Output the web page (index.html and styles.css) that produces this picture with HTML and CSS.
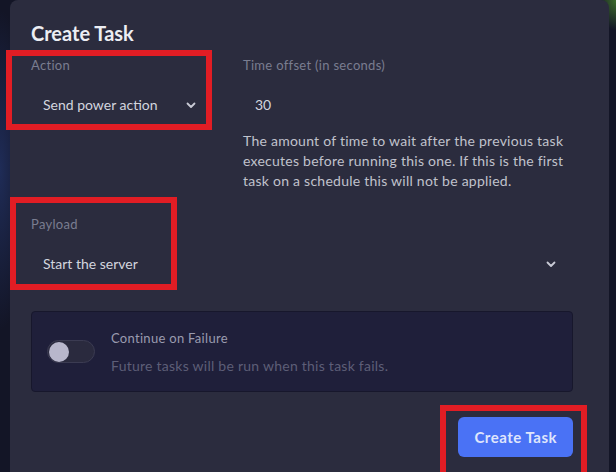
FILE: index.html
```html
<!DOCTYPE html>
<html lang="en">
<head>
<meta charset="utf-8">
<title>Create Task</title>
<link rel="stylesheet" href="styles.css">
</head>
<body>
<div class="modal">
  <h2 class="title">Create Task</h2>
  <div class="row">
    <div class="field">
      <label class="label">Action</label>
      <div class="select select-short">
        <span>Send power action</span>
        <svg class="chev" width="10" height="7" viewBox="0 0 10 7"><polyline points="1.5,1.5 5,5 8.5,1.5" fill="none" stroke="#c9cbd6" stroke-width="1.8" stroke-linecap="round" stroke-linejoin="round"/></svg>
      </div>
    </div>
    <div class="field">
      <label class="label">Time offset (in seconds)</label>
      <div class="input">30</div>
      <p class="help">The amount of time to wait after the previous task executes before running this one. If this is the first task on a schedule this will not be applied.</p>
    </div>
  </div>
  <div class="field payload">
    <label class="label">Payload</label>
    <div class="select">
      <span>Start the server</span>
      <svg class="chev" width="10" height="7" viewBox="0 0 10 7"><polyline points="1.5,1.5 5,5 8.5,1.5" fill="none" stroke="#c9cbd6" stroke-width="1.8" stroke-linecap="round" stroke-linejoin="round"/></svg>
    </div>
  </div>
  <div class="switch-box">
    <div class="switch"><span class="knob"></span></div>
    <div class="switch-text">
      <div class="switch-title">Continue on Failure</div>
      <p class="switch-desc">Future tasks will be run when this task fails.</p>
    </div>
  </div>
  <div class="actions">
    <button class="btn">Create Task</button>
  </div>
  <div class="mark mark-action"></div>
  <div class="mark mark-payload"></div>
  <div class="mark mark-button"></div>
</div>
</body>
</html>
```
FILE: styles.css
```css
html, body {
  margin: 0;
  padding: 0;
}
body {
  width: 616px;
  height: 472px;
  overflow: hidden;
  background:
    radial-gradient(ellipse 30px 160px at 0px 170px, #1f2c57 0%, rgba(31,44,87,0) 100%),
    radial-gradient(ellipse 20px 30px at 616px 0px, #3d6d2c 0%, rgba(61,109,44,0) 100%),
    #131526;
  font-family: Lato, "Open Sans", sans-serif;
}
.modal {
  position: relative;
  margin-left: 10px;
  width: 599px;
  height: 480px;
  box-sizing: border-box;
  padding: 21px 36px 0 21px;
  background: #2b2c3e;
  border-radius: 8px 8px 0 0;
}
.title {
  margin: 0 0 12px;
  font-size: 20px;
  line-height: 24px;
  font-weight: 700;
  color: #eceef3;
}
.row {
  display: grid;
  grid-template-columns: 196px 1fr;
  column-gap: 16px;
}
.label {
  display: block;
  font-size: 13px;
  line-height: 16px;
  letter-spacing: 0.3px;
  color: #7a7d90;
  margin-bottom: 12px;
}
.select {
  display: flex;
  align-items: center;
  justify-content: space-between;
  height: 40px;
  padding: 0 17px 0 12px;
  font-size: 14px;
  line-height: 20px;
  color: #d3d5de;
}
.select-short {
  width: 175px;
  box-sizing: border-box;
  padding-right: 10px;
}
.chev {
  display: block;
}
.input {
  height: 40px;
  display: flex;
  align-items: center;
  padding-left: 12px;
  font-size: 14px;
  line-height: 20px;
  color: #d3d5de;
}
.help {
  margin: 6px 0 0;
  font-size: 14px;
  line-height: 20px;
  letter-spacing: 0.25px;
  color: #c0c2cc;
}
.payload {
  margin-top: 25px;
}
.switch-box {
  margin-top: 27px;
  height: 81px;
  box-sizing: border-box;
  display: flex;
  align-items: center;
  gap: 16px;
  padding-left: 15px;
  background: #1f1f3a;
  border: 1px solid #17172c;
  border-radius: 4px;
}
.switch {
  position: relative;
  width: 48px;
  height: 23px;
  box-sizing: border-box;
  border-radius: 12px;
  background: #2a2a3e;
  border: 1px solid #3b3b52;
  flex: none;
}
.knob {
  position: absolute;
  left: 1px;
  top: 0.5px;
  width: 20px;
  height: 20px;
  border-radius: 50%;
  background: #b8b7cc;
}
.switch-title {
  font-size: 13px;
  line-height: 20px;
  letter-spacing: 0.3px;
  color: #9a9baf;
}
.switch-desc {
  margin: 8px 0 0;
  font-size: 14px;
  line-height: 20px;
  letter-spacing: 0.25px;
  color: #5d5e77;
}
.actions {
  display: flex;
  justify-content: flex-end;
  margin-top: 25px;
}
.btn {
  height: 40px;
  padding: 0 16px;
  border: 0;
  border-radius: 6px;
  background: #4a72f5;
  color: #dfe5fc;
  font-family: Lato, "Open Sans", sans-serif;
  font-size: 15px;
  font-weight: 700;
  letter-spacing: 0.5px;
}
.mark {
  position: absolute;
  box-sizing: border-box;
  border: 6px solid #e11d24;
}
.mark-action {
  left: -4px;
  top: 50px;
  width: 206px;
  height: 80px;
}
.mark-payload {
  left: 0;
  top: 197px;
  width: 167px;
  height: 93px;
}
.mark-button {
  left: 430px;
  top: 405px;
  width: 147px;
  height: 90px;
}
```
